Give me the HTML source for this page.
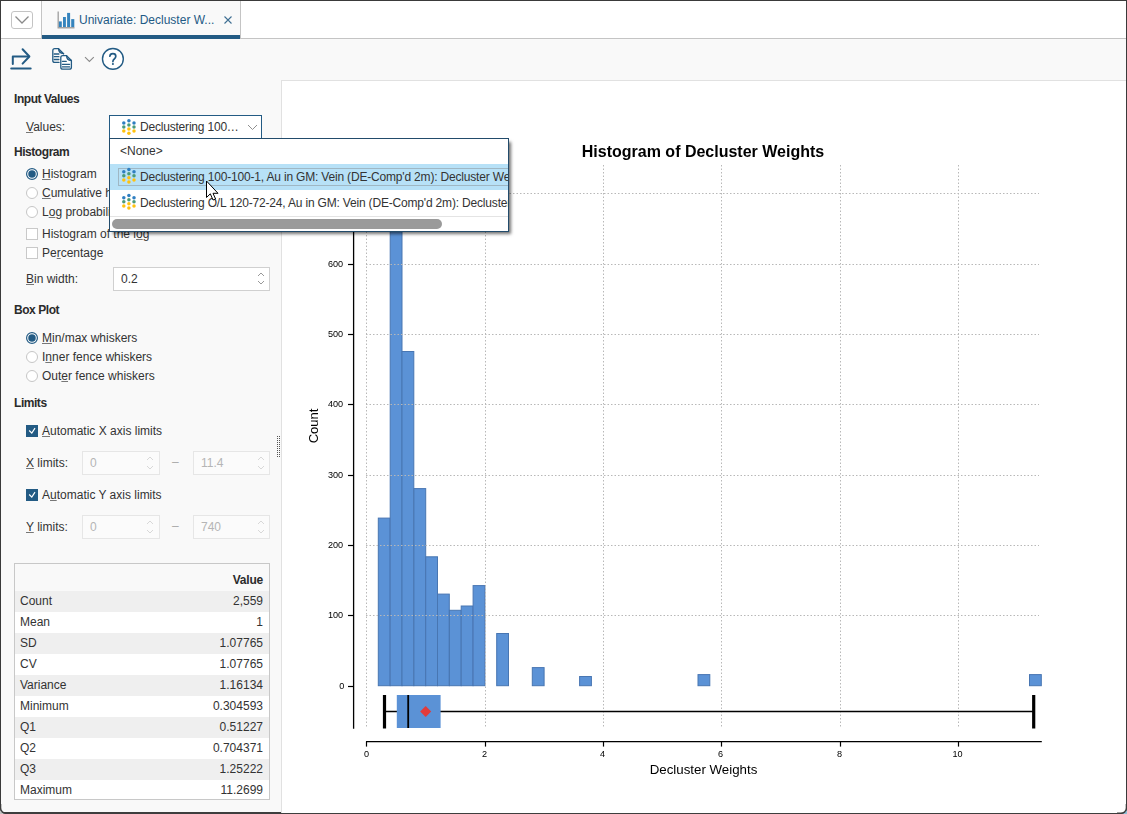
<!DOCTYPE html>
<html><head><meta charset="utf-8">
<style>
* { box-sizing: border-box; }
html, body { margin:0; padding:0; }
body { width:1127px; height:814px; position:relative; overflow:hidden; background:#f9f9f9;
  font-family: "Liberation Sans", sans-serif; font-size:12px; color:#333333; }
.a { position:absolute; white-space:nowrap; }
.t { position:absolute; white-space:nowrap; line-height:14px; }
.h { font-weight:bold; letter-spacing:-0.45px; color:#2b2b2b; }
.u { text-decoration: underline; text-decoration-color:#777; text-underline-offset:1px; }
.radio { position:absolute; width:12px; height:12px; border-radius:50%; border:1px solid #c9c9c9; background:#fff; }
.radio.on { border:1px solid #235b84; }
.radio.on::after { content:""; position:absolute; left:1.5px; top:1.5px; width:7px; height:7px; border-radius:50%; background:#235b84; }
.cb { position:absolute; width:12px; height:12px; border:1px solid #c9c9c9; background:#fff; }
.cb.on { background:#235b84; border-color:#235b84; }
.spin { position:absolute; border:1px solid #d0d0d0; background:#fff; }
.spin.dis { border-color:#e6e6e6; background:#fbfbfb; color:#b5b5b5; }
svg text { font-family:"Liberation Sans", sans-serif; fill:#000; }
.row { position:absolute; left:15px; width:254px; height:21px; }
.row span { position:absolute; top:3px; line-height:14px; }
.row .l { left:5px; }
.row .r { right:6px; }
</style></head><body>
<!-- window frame -->
<div class="a" style="left:0;top:0;width:1127px;height:814px;border:1px solid #3a3a3a;border-bottom:2px solid #3e3e3e;"></div>
<!-- tab bar -->
<div class="a" style="left:1px;top:1px;width:1125px;height:38px;background:#fff;border-bottom:1px solid #c4c4c4;"></div>
<div class="a" style="left:11px;top:11px;width:22px;height:18px;border:1px solid #c4c4c4;border-radius:3px;background:#fff;"></div>
<svg class="a" style="left:0;top:0" width="60" height="40"><path d="M15.5 16.5 L22 23 L28.5 16.5" fill="none" stroke="#8a8a8a" stroke-width="1.3"/></svg>
<div class="a" style="left:41px;top:1px;width:200px;height:38px;background:#f9f9f9;border-left:1px solid #c4c4c4;border-right:1px solid #c4c4c4;"></div>
<div class="a" style="left:42px;top:35px;width:198px;height:4px;background:#235b84;"></div>
<svg class="a" style="left:0;top:0" width="250" height="40">
 <path d="M58.2 11.5 V27.7 H74.5" fill="none" stroke="#a3a3a3" stroke-width="1.4"/>
 <rect x="58.9" y="21.4" width="2.9" height="5.6" fill="#3584bd"/>
 <rect x="63" y="17" width="2.9" height="10" fill="#3584bd"/>
 <rect x="67.1" y="12.9" width="3" height="14.1" fill="#3584bd"/>
 <rect x="71.2" y="19.1" width="3.1" height="7.9" fill="#3584bd"/>
 <path d="M224.5 16.5 L231.5 23.5 M231.5 16.5 L224.5 23.5" stroke="#3f6f93" stroke-width="1.1"/>
</svg>
<div class="t" style="left:79px;top:13px;color:#1e5a85;">Univariate: Decluster W...</div>
<!-- toolbar -->
<svg class="a" style="left:0;top:0" width="140" height="80">
 <g fill="none" stroke="#235b84" stroke-width="2" stroke-linecap="round" stroke-linejoin="round">
  <path d="M12.8 64 V56.5 H28.5"/>
  <path d="M22.6 49.3 L29.4 56.5 L22.6 63.6"/>
  <path d="M11.3 68.5 H30.6" stroke-width="2.2"/>
 </g>
 <g fill="none" stroke="#235b84" stroke-width="1.3" stroke-linecap="round" stroke-linejoin="round">
  <path d="M58.5 48.7 H54.8 Q52.8 48.7 52.8 50.7 V60.4 Q52.8 62.4 54.8 62.4 H59"/>
  <path d="M58.5 48.7 L63.6 53.7"/>
  <path d="M58.6 48.8 Q58.6 53.4 63.5 53.6" fill="#235b84" fill-opacity="0.35"/>
  <path d="M54.2 54 H58.9 M54.2 56.7 H58.9 M54.2 59.5 H58.9"/>
  <path d="M66.5 55.6 H62.8 Q60.8 55.6 60.8 57.6 V67.2 Q60.8 69.2 62.8 69.2 H69.4 Q71.4 69.2 71.4 67.2 V60.5 Z" fill="#fff"/>
  <path d="M66.6 55.7 Q66.6 60.3 71.3 60.5" fill="#235b84" fill-opacity="0.35"/>
  <path d="M62.4 61.3 H66.3 M62.4 64.3 H69.6 M62.4 66.9 H69.6"/>
 </g>
 <path d="M85 57.2 L89.4 61.5 L93.8 57.2" fill="none" stroke="#8a8a8a" stroke-width="1.1"/>
 <circle cx="112.9" cy="58.9" r="10.4" fill="#fff" stroke="#235b84" stroke-width="1.4"/>
 <path d="M109.9 56.2 Q110.1 53.7 112.9 53.7 Q115.8 53.7 115.8 56.3 Q115.8 57.9 114.3 59 Q112.9 60 112.9 61.6" fill="none" stroke="#235b84" stroke-width="1.7" stroke-linecap="round"/>
 <circle cx="112.9" cy="64" r="1.05" fill="#235b84"/>
</svg>
<!-- chart panel -->
<div class="a" style="left:281px;top:80px;width:845px;height:733px;background:#fff;border-left:1px solid #e1e1e1;border-top:1px solid #e1e1e1;border-bottom-right-radius:5px;"></div>
<svg class="a" style="left:0;top:0" width="1127" height="814">
<rect x="378.3" y="518.1" width="11.8" height="167.6" fill="#5b92d6" stroke="#4876b2" stroke-width="1"/>
<rect x="390.2" y="165.0" width="11.8" height="520.7" fill="#5b92d6" stroke="#4876b2" stroke-width="1"/>
<rect x="402.0" y="351.5" width="11.8" height="334.2" fill="#5b92d6" stroke="#4876b2" stroke-width="1"/>
<rect x="413.9" y="488.6" width="11.8" height="197.1" fill="#5b92d6" stroke="#4876b2" stroke-width="1"/>
<rect x="425.7" y="556.8" width="11.8" height="128.9" fill="#5b92d6" stroke="#4876b2" stroke-width="1"/>
<rect x="437.5" y="594.1" width="11.8" height="91.6" fill="#5b92d6" stroke="#4876b2" stroke-width="1"/>
<rect x="449.4" y="610.3" width="11.8" height="75.4" fill="#5b92d6" stroke="#4876b2" stroke-width="1"/>
<rect x="461.2" y="606.0" width="11.8" height="79.7" fill="#5b92d6" stroke="#4876b2" stroke-width="1"/>
<rect x="473.1" y="585.6" width="11.8" height="100.1" fill="#5b92d6" stroke="#4876b2" stroke-width="1"/>
<rect x="496.7" y="633.5" width="11.8" height="52.2" fill="#5b92d6" stroke="#4876b2" stroke-width="1"/>
<rect x="532.3" y="667.6" width="11.8" height="18.1" fill="#5b92d6" stroke="#4876b2" stroke-width="1"/>
<rect x="579.6" y="676.5" width="11.8" height="9.2" fill="#5b92d6" stroke="#4876b2" stroke-width="1"/>
<rect x="698.0" y="674.6" width="11.8" height="11.1" fill="#5b92d6" stroke="#4876b2" stroke-width="1"/>
<rect x="1029.5" y="674.6" width="11.8" height="11.1" fill="#5b92d6" stroke="#4876b2" stroke-width="1"/>
<line x1="366.5" y1="165" x2="366.5" y2="728" stroke="#b8b8b8" stroke-width="1" stroke-dasharray="1.5,2"/>
<line x1="485.5" y1="165" x2="485.5" y2="728" stroke="#b8b8b8" stroke-width="1" stroke-dasharray="1.5,2"/>
<line x1="603.5" y1="165" x2="603.5" y2="728" stroke="#b8b8b8" stroke-width="1" stroke-dasharray="1.5,2"/>
<line x1="721.5" y1="165" x2="721.5" y2="728" stroke="#b8b8b8" stroke-width="1" stroke-dasharray="1.5,2"/>
<line x1="840.5" y1="165" x2="840.5" y2="728" stroke="#b8b8b8" stroke-width="1" stroke-dasharray="1.5,2"/>
<line x1="958.5" y1="165" x2="958.5" y2="728" stroke="#b8b8b8" stroke-width="1" stroke-dasharray="1.5,2"/>
<line x1="366" y1="615.5" x2="1039" y2="615.5" stroke="#b8b8b8" stroke-width="1" stroke-dasharray="1.5,2"/>
<line x1="366" y1="545.5" x2="1039" y2="545.5" stroke="#b8b8b8" stroke-width="1" stroke-dasharray="1.5,2"/>
<line x1="366" y1="475.5" x2="1039" y2="475.5" stroke="#b8b8b8" stroke-width="1" stroke-dasharray="1.5,2"/>
<line x1="366" y1="404.5" x2="1039" y2="404.5" stroke="#b8b8b8" stroke-width="1" stroke-dasharray="1.5,2"/>
<line x1="366" y1="334.5" x2="1039" y2="334.5" stroke="#b8b8b8" stroke-width="1" stroke-dasharray="1.5,2"/>
<line x1="366" y1="264.5" x2="1039" y2="264.5" stroke="#b8b8b8" stroke-width="1" stroke-dasharray="1.5,2"/>
<line x1="366" y1="193.5" x2="1039" y2="193.5" stroke="#b8b8b8" stroke-width="1" stroke-dasharray="1.5,2"/>
<line x1="384.5" y1="711.5" x2="1033.7" y2="711.5" stroke="#000" stroke-width="1.6"/>
<rect x="396.8" y="695" width="43.8" height="33" fill="#5b92d6"/>
<line x1="408.2" y1="695" x2="408.2" y2="728" stroke="#000" stroke-width="1.8"/>
<line x1="384.5" y1="695" x2="384.5" y2="728.5" stroke="#000" stroke-width="3.2"/>
<line x1="1033.7" y1="695" x2="1033.7" y2="728.5" stroke="#000" stroke-width="3.2"/>
<path d="M425.7 706 L431.2 711.5 L425.7 717 L420.2 711.5Z" fill="#e23b3b"/>
<line x1="353.6" y1="167" x2="353.6" y2="728.8" stroke="#000" stroke-width="1.3"/>
<line x1="348" y1="686.5" x2="353.6" y2="686.5" stroke="#000" stroke-width="1.2"/>
<line x1="348" y1="615.5" x2="353.6" y2="615.5" stroke="#000" stroke-width="1.2"/>
<line x1="348" y1="545.5" x2="353.6" y2="545.5" stroke="#000" stroke-width="1.2"/>
<line x1="348" y1="475.5" x2="353.6" y2="475.5" stroke="#000" stroke-width="1.2"/>
<line x1="348" y1="404.5" x2="353.6" y2="404.5" stroke="#000" stroke-width="1.2"/>
<line x1="348" y1="334.5" x2="353.6" y2="334.5" stroke="#000" stroke-width="1.2"/>
<line x1="348" y1="264.5" x2="353.6" y2="264.5" stroke="#000" stroke-width="1.2"/>
<line x1="348" y1="193.5" x2="353.6" y2="193.5" stroke="#000" stroke-width="1.2"/>
<line x1="366" y1="741.6" x2="1041.8" y2="741.6" stroke="#000" stroke-width="1.3"/>
<line x1="366.5" y1="741.5" x2="366.5" y2="746.6" stroke="#000" stroke-width="1.2"/>
<line x1="485.5" y1="741.5" x2="485.5" y2="746.6" stroke="#000" stroke-width="1.2"/>
<line x1="603.5" y1="741.5" x2="603.5" y2="746.6" stroke="#000" stroke-width="1.2"/>
<line x1="721.5" y1="741.5" x2="721.5" y2="746.6" stroke="#000" stroke-width="1.2"/>
<line x1="840.5" y1="741.5" x2="840.5" y2="746.6" stroke="#000" stroke-width="1.2"/>
<line x1="958.5" y1="741.5" x2="958.5" y2="746.6" stroke="#000" stroke-width="1.2"/>
</svg>
<!-- left panel -->
<div class="t h" style="left:14px;top:92px;">Input Values</div>
<div class="t" style="left:26px;top:120px;"><span class="u">V</span>alues:</div>
<div class="a" style="left:109px;top:115px;width:153px;height:24px;border:1px solid #235b84;background:#fff;"></div>
<svg class="a" style="left:0;top:0" width="280" height="140"><circle cx="123.8" cy="122.9" r="1.75" fill="#2f7fc1"/><circle cx="123.8" cy="126.9" r="1.75" fill="#4c9b7a"/><circle cx="123.8" cy="131.1" r="1.75" fill="#ffc20e"/><circle cx="128.9" cy="120.7" r="1.75" fill="#2f7fc1"/><circle cx="128.9" cy="124.9" r="1.75" fill="#4c9b7a"/><circle cx="128.9" cy="128.9" r="1.75" fill="#ffc20e"/><circle cx="128.9" cy="133.2" r="1.75" fill="#ffc20e"/><circle cx="134.0" cy="122.9" r="1.75" fill="#2f7fc1"/><circle cx="134.0" cy="126.9" r="1.75" fill="#4c9b7a"/><circle cx="134.0" cy="131.1" r="1.75" fill="#ffc20e"/>
 <path d="M248 125 L252.5 129.5 L257 125" fill="none" stroke="#8f8f8f" stroke-width="1"/></svg>
<div class="t" style="left:140px;top:120px;letter-spacing:-0.2px;">Declustering 100…</div>

<div class="t h" style="left:14px;top:145px;">Histogram</div>
<svg class="a" style="left:24px;top:166px" width="16" height="16"><circle cx="8" cy="8" r="5.4" fill="#fff" stroke="#235b84" stroke-width="1.2"/><circle cx="8" cy="8" r="3.75" fill="#235b84"/></svg>
<div class="t" style="left:42px;top:167px;"><span class="u">H</span>istogram</div>
<svg class="a" style="left:24px;top:185px" width="16" height="16"><circle cx="8" cy="8" r="5.5" fill="#fff" stroke="#c6c6c6" stroke-width="1"/></svg>
<div class="t" style="left:42px;top:186px;"><span class="u">C</span>umulative histogram</div>
<svg class="a" style="left:24px;top:204px" width="16" height="16"><circle cx="8" cy="8" r="5.5" fill="#fff" stroke="#c6c6c6" stroke-width="1"/></svg>
<div class="t" style="left:42px;top:205px;">L<span class="u">o</span>g probability plot</div>
<div class="cb" style="left:26px;top:228px;"></div>
<div class="t" style="left:42px;top:227px;">Histogram of the l<span class="u">o</span>g</div>
<div class="cb" style="left:26px;top:247px;"></div>
<div class="t" style="left:42px;top:246px;">Pe<span class="u">r</span>centage</div>
<div class="t" style="left:26px;top:272px;"><span class="u">B</span>in width:</div>
<div class="spin" style="left:113px;top:267px;width:157px;height:24px;"></div>
<div class="t" style="left:121px;top:272px;">0.2</div>
<svg class="a" style="left:0;top:0" width="280" height="300"><path d="M258 276 L261 273 L264 276 M258 281 L261 284 L264 281" fill="none" stroke="#999" stroke-width="1"/></svg>

<div class="t h" style="left:14px;top:303px;">Box Plot</div>
<svg class="a" style="left:24px;top:330px" width="16" height="16"><circle cx="8" cy="8" r="5.4" fill="#fff" stroke="#235b84" stroke-width="1.2"/><circle cx="8" cy="8" r="3.75" fill="#235b84"/></svg>
<div class="t" style="left:42px;top:331px;"><span class="u">M</span>in/max whiskers</div>
<svg class="a" style="left:24px;top:349px" width="16" height="16"><circle cx="8" cy="8" r="5.5" fill="#fff" stroke="#c6c6c6" stroke-width="1"/></svg>
<div class="t" style="left:42px;top:350px;">I<span class="u">n</span>ner fence whiskers</div>
<svg class="a" style="left:24px;top:368px" width="16" height="16"><circle cx="8" cy="8" r="5.5" fill="#fff" stroke="#c6c6c6" stroke-width="1"/></svg>
<div class="t" style="left:42px;top:369px;">Out<span class="u">e</span>r fence whiskers</div>

<div class="t h" style="left:14px;top:396px;">Limits</div>
<div class="cb on" style="left:26px;top:425px;"></div>
<div class="t" style="left:42px;top:424px;"><span class="u">A</span>utomatic X axis limits</div>
<div class="t" style="left:26px;top:456px;"><span class="u">X</span> limits:</div>
<div class="spin dis" style="left:82px;top:451px;width:78px;height:24px;"></div>
<div class="t" style="left:90px;top:456px;color:#b5b5b5;">0</div>
<div class="t" style="left:172px;top:455px;color:#aaa;">–</div>
<div class="spin dis" style="left:193px;top:451px;width:77px;height:24px;"></div>
<div class="t" style="left:201px;top:456px;color:#b5b5b5;">11.4</div>
<div class="cb on" style="left:26px;top:489px;"></div>
<div class="t" style="left:42px;top:488px;">A<span class="u">u</span>tomatic Y axis limits</div>
<div class="t" style="left:26px;top:520px;"><span class="u">Y</span> limits:</div>
<div class="spin dis" style="left:82px;top:515px;width:78px;height:24px;"></div>
<div class="t" style="left:90px;top:520px;color:#b5b5b5;">0</div>
<div class="t" style="left:172px;top:519px;color:#aaa;">–</div>
<div class="spin dis" style="left:193px;top:515px;width:77px;height:24px;"></div>
<div class="t" style="left:201px;top:520px;color:#b5b5b5;">740</div>
<svg class="a" style="left:0;top:0" width="280" height="560">
 <path d="M29.2 430.5 L31.8 433.1 L35 428.2 M29.2 494.5 L31.8 497.1 L35 492.2" fill="none" stroke="#fff" stroke-width="1.2"/>
 <path d="M147 460 L150 457 L153 460 M147 466 L150 469 L153 466 M258 460 L261 457 L264 460 M258 466 L261 469 L264 466 M147 524 L150 521 L153 524 M147 530 L150 533 L153 530 M258 524 L261 521 L264 524 M258 530 L261 533 L264 530" fill="none" stroke="#d8d8d8" stroke-width="1"/>
</svg>
<div class="a" style="left:277px;top:436px;width:3px;height:21px;border-left:1px dotted #555;border-right:1px dotted #555;"></div>

<!-- table -->
<div class="a" style="left:14px;top:563px;width:256px;height:237px;border:1px solid #c8c8c8;background:#fff;overflow:hidden;">
</div>
<div class="row" style="top:564px;height:27px;background:#f9f9f9;"><span class="r" style="top:9px;font-weight:bold;color:#2b2b2b;letter-spacing:-0.2px">Value</span></div>
<div class="row" style="top:591px;background:#efefef;"><span class="l">Count</span><span class="r">2,559</span></div>
<div class="row" style="top:612px;background:#fff;"><span class="l">Mean</span><span class="r">1</span></div>
<div class="row" style="top:633px;background:#efefef;"><span class="l">SD</span><span class="r">1.07765</span></div>
<div class="row" style="top:654px;background:#fff;"><span class="l">CV</span><span class="r">1.07765</span></div>
<div class="row" style="top:675px;background:#efefef;"><span class="l">Variance</span><span class="r">1.16134</span></div>
<div class="row" style="top:696px;background:#fff;"><span class="l">Minimum</span><span class="r">0.304593</span></div>
<div class="row" style="top:717px;background:#efefef;"><span class="l">Q1</span><span class="r">0.51227</span></div>
<div class="row" style="top:738px;background:#fff;"><span class="l">Q2</span><span class="r">0.704371</span></div>
<div class="row" style="top:759px;background:#efefef;"><span class="l">Q3</span><span class="r">1.25222</span></div>
<div class="row" style="top:780px;height:19px;background:#fff;"><span class="l">Maximum</span><span class="r">11.2699</span></div>

<!-- popup -->
<div class="a" style="left:109px;top:138px;width:400px;height:94px;background:#fff;border:1px solid #224b6b;box-shadow:3px 3px 3px -1px rgba(0,0,0,0.55);overflow:hidden;">
</div>
<div class="a" style="left:110px;top:139px;width:398px;height:92px;overflow:hidden;">
  <div class="t" style="left:10px;top:5px;">&lt;None&gt;</div>
  <div class="a" style="left:0;top:25px;width:398px;height:26px;background:#b7e1f7;"></div>
  <div class="a" style="left:8px;top:29px;width:400px;height:18px;border:1px solid #9fb7c4;"></div>
  <div class="t" style="left:30px;top:31px;letter-spacing:-0.18px;">Declustering 100-100-1, Au in GM: Vein (DE-Comp'd 2m): Decluster Weights</div>
  <div class="t" style="left:30px;top:57px;letter-spacing:-0.18px;">Declustering O/L 120-72-24, Au in GM: Vein (DE-Comp'd 2m): Decluster Weights</div>
  <div class="a" style="left:0;top:77px;width:398px;height:1px;background:#e4e4e4;"></div>
  <div class="a" style="left:2px;top:80px;width:330px;height:10px;border-radius:5px;background:#9a9a9a;"></div>
</div>
<svg class="a" style="left:0;top:0" width="520" height="240"><circle cx="123.8" cy="171.7" r="1.75" fill="#2f7fc1"/><circle cx="123.8" cy="175.7" r="1.75" fill="#4c9b7a"/><circle cx="123.8" cy="179.9" r="1.75" fill="#ffc20e"/><circle cx="128.9" cy="169.5" r="1.75" fill="#2f7fc1"/><circle cx="128.9" cy="173.7" r="1.75" fill="#4c9b7a"/><circle cx="128.9" cy="177.7" r="1.75" fill="#ffc20e"/><circle cx="128.9" cy="182.0" r="1.75" fill="#ffc20e"/><circle cx="134.0" cy="171.7" r="1.75" fill="#2f7fc1"/><circle cx="134.0" cy="175.7" r="1.75" fill="#4c9b7a"/><circle cx="134.0" cy="179.9" r="1.75" fill="#ffc20e"/><circle cx="123.8" cy="197.7" r="1.75" fill="#2f7fc1"/><circle cx="123.8" cy="201.7" r="1.75" fill="#4c9b7a"/><circle cx="123.8" cy="205.9" r="1.75" fill="#ffc20e"/><circle cx="128.9" cy="195.5" r="1.75" fill="#2f7fc1"/><circle cx="128.9" cy="199.7" r="1.75" fill="#4c9b7a"/><circle cx="128.9" cy="203.7" r="1.75" fill="#ffc20e"/><circle cx="128.9" cy="208.0" r="1.75" fill="#ffc20e"/><circle cx="134.0" cy="197.7" r="1.75" fill="#2f7fc1"/><circle cx="134.0" cy="201.7" r="1.75" fill="#4c9b7a"/><circle cx="134.0" cy="205.9" r="1.75" fill="#ffc20e"/></svg>
<!-- cursor -->
<svg class="a" style="left:0;top:0" width="240" height="220">
 <path d="M206.5 181 V197.5 L210.3 193.8 L213 200 L215.6 199 L213 193.3 L218 193.3 Z" fill="#fff" stroke="#000" stroke-width="1"/>
</svg>
<svg class="a" style="left:0;top:804px" width="10" height="10">
 <path d="M0 4 A6 6 0 0 0 6 10 L0 10 Z" fill="#c4c4c4"/>
 <path d="M0.6 0 V4 A5.4 5.4 0 0 0 6 9.3 H10" fill="none" stroke="#3c3c3c" stroke-width="1.4"/>
</svg>
<svg class="a" style="left:1117px;top:804px" width="10" height="10">
 <path d="M10 4 A6 6 0 0 1 4 10 L10 10 Z" fill="#8fbfd8"/>
 <path d="M9.4 0 V4 A5.4 5.4 0 0 1 4 9.3 H0" fill="none" stroke="#3c3c3c" stroke-width="1.4"/>
</svg>
<svg class="a" style="left:0;top:0;will-change:transform" width="1127" height="814">
<text transform="translate(344.3,688.8) scale(0.95,1)" text-anchor="end" font-size="9.6">0</text>
<text transform="translate(343.2,617.8) scale(0.95,1)" text-anchor="end" font-size="9.6">100</text>
<text transform="translate(343.2,547.8) scale(0.95,1)" text-anchor="end" font-size="9.6">200</text>
<text transform="translate(343.2,477.8) scale(0.95,1)" text-anchor="end" font-size="9.6">300</text>
<text transform="translate(343.2,406.8) scale(0.95,1)" text-anchor="end" font-size="9.6">400</text>
<text transform="translate(343.2,336.8) scale(0.95,1)" text-anchor="end" font-size="9.6">500</text>
<text transform="translate(343.2,266.8) scale(0.95,1)" text-anchor="end" font-size="9.6">600</text>
<text transform="translate(366.5,757) scale(0.95,1)" text-anchor="middle" font-size="9.6">0</text>
<text transform="translate(484.6,757) scale(0.95,1)" text-anchor="middle" font-size="9.6">2</text>
<text transform="translate(602.6,757) scale(0.95,1)" text-anchor="middle" font-size="9.6">4</text>
<text transform="translate(720.6,757) scale(0.95,1)" text-anchor="middle" font-size="9.6">6</text>
<text transform="translate(839.6,757) scale(0.95,1)" text-anchor="middle" font-size="9.6">8</text>
<text transform="translate(957.6,757) scale(0.95,1)" text-anchor="middle" font-size="9.6">10</text>
<text x="703.5" y="774" text-anchor="middle" font-size="13.3">Decluster Weights</text>
<text transform="translate(318,426) rotate(-90)" text-anchor="middle" font-size="13">Count</text>
<text x="703" y="157" text-anchor="middle" font-size="16" font-weight="bold">Histogram of Decluster Weights</text>
</svg>
</body></html>
